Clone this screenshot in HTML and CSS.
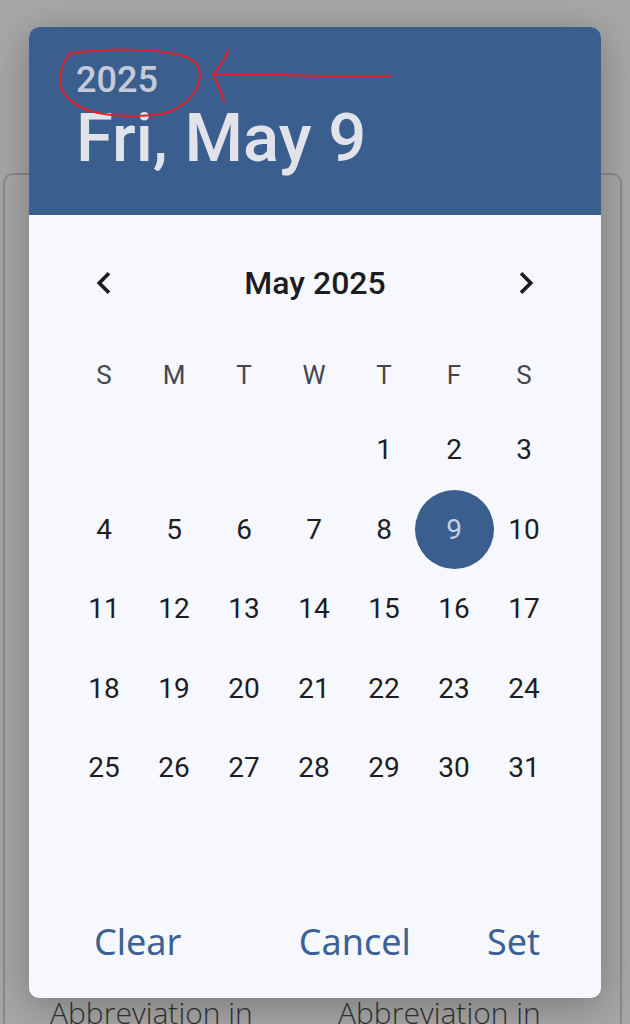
FILE: index.html
```html
<!DOCTYPE html>
<html lang="en">
<head>
    <meta charset="UTF-8">
    <meta name="viewport" content="width=device-width, initial-scale=1.0">
    <title>Pick a date</title>
    <link rel="stylesheet" href="styles.css">
</head>
<body>

<!-- page underneath the dialog -->
<div class="page">
    <div class="card">
        <div class="card-fields">
            <span class="field-label">Abbreviation in</span>
            <span class="field-label">Abbreviation in</span>
        </div>
    </div>
</div>

<div class="dialog">
    <header class="dialog-header">
        <div class="header-year">2025</div>
        <div class="header-date">Fri, May 9</div>
    </header>

    <div class="month-nav">
        <button class="nav-btn" type="button" aria-label="Previous month">
            <svg viewBox="0 0 24 24" width="44" height="44"><path d="M15.41 7.41L14 6l-6 6 6 6 1.41-1.41L10.83 12z"/></svg>
        </button>
        <span class="month-title">May 2025</span>
        <button class="nav-btn" type="button" aria-label="Next month">
            <svg viewBox="0 0 24 24" width="44" height="44"><path d="M10 6L8.59 7.41 13.17 12l-4.58 4.59L10 18l6-6z"/></svg>
        </button>
    </div>

    <div class="weekdays">
        <span>S</span><span>M</span><span>T</span><span>W</span><span>T</span><span>F</span><span>S</span>
    </div>

    <div class="days" id="days"></div>

    <div class="actions">
        <button class="action-btn" type="button">Clear</button>
        <button class="action-btn cancel" type="button">Cancel</button>
        <button class="action-btn" type="button">Set</button>
    </div>
</div>

<!-- red pen markup on top -->
<svg class="markup" viewBox="0 0 630 1024" width="630" height="1024">
    <path d="M72 52 C66 57 60 68 60 82 C61 96 76 108 98 113 C118 117 148 117 166 113 C186 106 199 92 200 76 C200 62 190 56 170 53 C148 49 110 48 74 53"/>
    <path d="M390 76 L330 76 L280 75 L240 75 L213 74"/>
    <path d="M228 50 C225 60 219 68 213 74 C218 84 222 92 224 102"/>
</svg>

<script>
    // Build the May 2025 grid (May 1st is a Thursday)
    function buildDays() {
        const grid = document.getElementById('days');
        const firstWeekday = 4;
        const daysInMonth = 31;
        const selected = 9;

        for (let i = 0; i < firstWeekday; i++) {
            grid.appendChild(document.createElement('span'));
        }
        for (let d = 1; d <= daysInMonth; d++) {
            const cell = document.createElement('span');
            cell.className = d === selected ? 'day selected' : 'day';
            cell.innerHTML = `<span class="day-num">${d}</span>`;
            grid.appendChild(cell);
        }
    }

    buildDays();
</script>

</body>
</html>
```

FILE: styles.css
```css
body {
    margin: 0;
    width: 630px;
    height: 1024px;
    overflow: hidden;
    background-color: #a7a7a7;
    font-family: Roboto, "Liberation Sans", sans-serif;
    position: relative;
}

/* Page behind the scrim */
.page {
    padding: 173px 0 0 3px;
}

.card {
    width: 619px;
    height: 860px;
    border: 2px solid #88888e;
    border-bottom: none;
    border-radius: 10px 10px 0 0;
    padding: 817px 0 0 45px;
    box-sizing: border-box;
}

.card-fields {
    display: grid;
    grid-template-columns: 288px 1fr;
}

.field-label {
    font-family: "Open Sans", sans-serif;
    font-weight: 300;
    font-size: 30px;
    color: #333335;
    white-space: nowrap;
}

/* Date picker dialog */
.dialog {
    position: absolute;
    top: 27px;
    left: 29px;
    width: 572px;
    height: 971px;
    background-color: #f7f8fd;
    border-radius: 10px;
    overflow: hidden;
    box-shadow: 0 8px 40px rgba(0, 0, 0, 0.28);
    display: flex;
    flex-direction: column;
}

.dialog-header {
    height: 188px;
    flex: none;
    box-sizing: border-box;
    padding: 35px 0 0 47px;
    background-color: #3a5e8d;
}

.header-year {
    font-size: 36px;
    font-weight: 500;
    line-height: 1;
    color: #c4cad8;
}

.header-date {
    margin-top: 7px;
    font-size: 67px;
    font-weight: 500;
    line-height: 1;
    color: #e1e2ea;
}

.month-nav {
    margin-top: 38px;
    height: 60px;
    padding: 0 53px;
    display: flex;
    align-items: center;
    justify-content: space-between;
}

.nav-btn {
    width: 44px;
    height: 44px;
    padding: 0;
    border: none;
    background: none;
    display: flex;
}

.nav-btn svg {
    fill: #1c1d22;
}

.month-title {
    font-size: 32px;
    font-weight: 500;
    color: #1c1d22;
}

.weekdays,
.days {
    display: grid;
    grid-template-columns: repeat(7, 70px);
    padding-left: 40px;
}

.weekdays {
    margin-top: 27px;
    height: 70px;
    align-items: center;
    justify-items: center;
    font-size: 26px;
    color: #46474d;
}

.days {
    grid-auto-rows: 79.5px;
    font-size: 28px;
    color: #1d1e22;
}

.day {
    display: flex;
    align-items: center;
    justify-content: center;
}

.day-num {
    flex: none;
    width: 79px;
    height: 79px;
    border-radius: 50%;
    display: flex;
    align-items: center;
    justify-content: center;
}

.day.selected .day-num {
    background-color: #3a5f8e;
    color: #c8cfe1;
}

.actions {
    margin-top: auto;
    height: 80px;
    margin-bottom: 17px;
    padding: 0 61px 0 65px;
    display: flex;
    align-items: center;
}

.action-btn {
    padding: 0;
    border: none;
    background: none;
    font-family: "Noto Sans", "Open Sans", sans-serif;
    font-size: 36px;
    color: #3b6196;
}

.action-btn.cancel {
    margin-left: auto;
    margin-right: 76px;
}

/* Pen markup */
.markup {
    position: absolute;
    top: 0;
    left: 0;
    pointer-events: none;
}

.markup path {
    fill: none;
    stroke: #e3202a;
    stroke-width: 2;
    stroke-linecap: round;
    stroke-linejoin: round;
}
```
